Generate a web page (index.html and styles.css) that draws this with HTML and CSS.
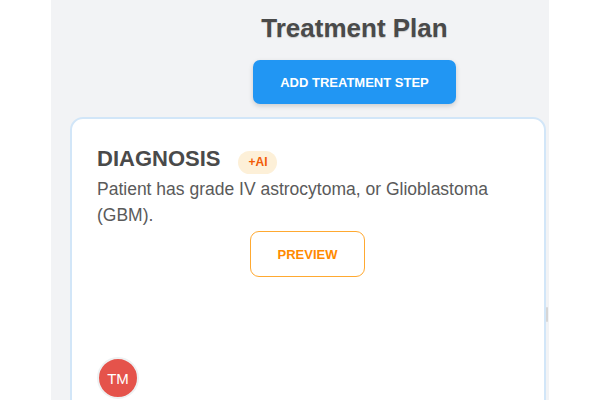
FILE: index.html
```html
<!DOCTYPE html>
<html>
<head>
<meta charset="utf-8">
<link rel="stylesheet" href="styles.css">
</head>
<body>
<div class="panel">
  <div class="header">
    <h1 class="title">Treatment Plan</h1>
    <button class="add-btn">ADD TREATMENT STEP</button>
  </div>
  <div class="card">
    <div class="card-head">
      <h2 class="card-title">DIAGNOSIS</h2>
      <span class="badge">+AI</span>
    </div>
    <p class="desc">Patient has grade IV astrocytoma, or Glioblastoma (GBM).</p>
    <div class="actions">
      <button class="preview-btn">PREVIEW</button>
    </div>
    <div class="avatar">TM</div>
  </div>
  <div class="scroll-thumb"></div>
</div>
</body>
</html>
```

FILE: styles.css
```css
html, body {
  margin: 0;
  padding: 0;
  background: #ffffff;
  width: 600px;
  height: 400px;
  overflow: hidden;
  font-family: "Liberation Sans", Arial, sans-serif;
}

.panel {
  position: relative;
  margin-left: 51px;
  width: 498px;
  height: 400px;
  background: #f2f3f5;
  box-sizing: border-box;
  padding: 13px 3px 0 19px;
  overflow: hidden;
}

.header {
  display: flex;
  flex-direction: column;
  align-items: center;
  padding-left: 93px;
}

.title {
  margin: 0;
  font-size: 26px;
  line-height: 30px;
  font-weight: bold;
  color: #4a4a4a;
  text-shadow: 0 1px 1px rgba(0, 0, 0, 0.18);
}

.add-btn {
  margin-top: 17px;
  width: 203px;
  height: 44px;
  border: none;
  border-radius: 7px;
  background: #2196f3;
  color: #ffffff;
  font-family: "Liberation Sans", Arial, sans-serif;
  font-size: 13px;
  font-weight: bold;
  box-shadow: 0 2px 5px rgba(0, 0, 0, 0.16);
  padding: 0;
}

.card {
  margin-top: 13px;
  background: #ffffff;
  border: 2px solid #d2e6f8;
  border-radius: 13px;
  padding: 27px 26px 0 25px;
  height: 320px;
  box-sizing: border-box;
}

.card-head {
  display: flex;
  align-items: baseline;
  gap: 18px;
}

.card-title {
  margin: 0;
  font-size: 22px;
  line-height: 26px;
  font-weight: bold;
  color: #4a4a4a;
}

.badge {
  background: #fdf0d8;
  color: #f25c05;
  font-size: 12px;
  font-weight: bold;
  line-height: 15px;
  padding: 4px 10px;
  border-radius: 12px;
}

.desc {
  margin: 2px 0 0;
  font-size: 17.5px;
  line-height: 26px;
  color: #5a5a5a;
}

.actions {
  display: flex;
  justify-content: center;
  margin-top: 3px;
}

.preview-btn {
  width: 115px;
  height: 46px;
  background: #ffffff;
  border: 1.5px solid #ffa931;
  border-radius: 9px;
  color: #ff8a00;
  font-family: "Liberation Sans", Arial, sans-serif;
  font-size: 13px;
  font-weight: bold;
  padding: 0;
}

.avatar {
  margin-top: 80px;
  width: 38px;
  height: 38px;
  border-radius: 50%;
  background: #e5534b;
  border: 2px solid #eef1f2;
  color: #ffffff;
  font-size: 15px;
  display: flex;
  align-items: center;
  justify-content: center;
}

.scroll-thumb {
  position: absolute;
  right: 1px;
  top: 307px;
  width: 2px;
  height: 15px;
  background: #d6d6d6;
  border-radius: 1px;
}
```
